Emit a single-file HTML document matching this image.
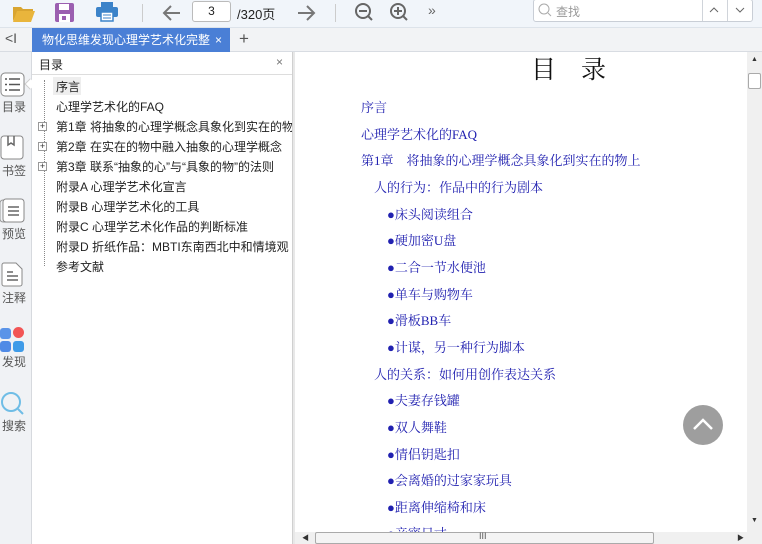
<!DOCTYPE html>
<html><head><meta charset="utf-8"><style>
*{margin:0;padding:0;box-sizing:border-box}
body{width:762px;height:544px;overflow:hidden;position:relative;background:#fff;font-family:"Liberation Sans","Noto Sans CJK SC",sans-serif;font-size:12px;color:#222}
.abs{position:absolute}
#tb{left:0;top:0;width:762px;height:28px;background:#f1f5fa;border-bottom:1px solid #dde3ea}
#tabs{left:0;top:28px;width:762px;height:24px;background:#f2f3f5;border-bottom:1px solid #d8dce2}
#side{left:0;top:52px;width:32px;height:492px;background:#f0f2f5;border-right:1px solid #d6d9de}
#toc{left:32px;top:52px;width:261px;height:492px;background:#fff;border-right:1px solid #d0d0d0}
.si{position:absolute;left:0;width:28px;text-align:center;font-size:12px;color:#555}
.ti{position:absolute;left:56px;font-size:12px;color:#222;white-space:nowrap;width:236px;overflow:hidden}
.pl{position:absolute;left:38px;width:9px;height:9px;border:1px solid #999;background:#fff;font-size:9px;line-height:7px;text-align:center;color:#333}
#page{left:295px;top:52px;width:452px;height:480px;background:#fff;overflow:hidden;font-family:"Liberation Serif","Noto Serif CJK SC",serif;color:#2020b0;font-size:13px}
.l{position:absolute;white-space:nowrap}
</style></head><body>
<div id="tb" class="abs">
 <svg class="abs" style="left:12px;top:3px" width="24" height="20"><path d="M1 4h8l2 2h10v3H6L1 18z" fill="#d9a531"/><path d="M5 8h18l-4 11H1z" fill="#e9b53c"/></svg>
 <svg class="abs" style="left:55px;top:3px" width="19" height="19"><rect x="0" y="0" width="19" height="19" rx="2" fill="#9b5fb0"/><rect x="4" y="1" width="10" height="6" fill="#fff"/><rect x="4" y="11" width="11" height="8" fill="#fff"/><rect x="7" y="13" width="4" height="4" fill="#9b5fb0"/></svg>
 <svg class="abs" style="left:96px;top:2px" width="22" height="20"><rect x="5" y="0" width="12" height="5" fill="#3c83c9"/><rect x="0" y="5" width="22" height="10" rx="2" fill="#3c83c9"/><rect x="5" y="10" width="12" height="9" fill="#fff" stroke="#3c83c9" stroke-width="1.5"/><line x1="7" y1="13" x2="15" y2="13" stroke="#3c83c9"/><line x1="7" y1="16" x2="15" y2="16" stroke="#3c83c9"/></svg>
 <div class="abs" style="left:142px;top:4px;width:1px;height:18px;background:#ccc"></div>
 <svg class="abs" style="left:162px;top:3px" width="20" height="20"><path d="M18 10H3M9 3L2 10l7 7" fill="none" stroke="#777" stroke-width="2"/></svg>
 <div class="abs" style="left:192px;top:1px;width:39px;height:21px;border:1px solid #bbb;border-radius:3px;background:#fff;text-align:center;line-height:19px">3</div>
 <div class="abs" style="left:237px;top:4px;font-size:13px">/320页</div>
 <svg class="abs" style="left:296px;top:3px" width="20" height="20"><path d="M2 10h15M11 3l7 7-7 7" fill="none" stroke="#777" stroke-width="2"/></svg>
 <div class="abs" style="left:335px;top:4px;width:1px;height:18px;background:#ccc"></div>
 <svg class="abs" style="left:354px;top:2px" width="20" height="20"><circle cx="9" cy="9" r="7" fill="none" stroke="#666" stroke-width="2"/><path d="M5 9h8M14 14l4 4" stroke="#666" stroke-width="2"/></svg>
 <svg class="abs" style="left:389px;top:2px" width="20" height="20"><circle cx="9" cy="9" r="7" fill="none" stroke="#666" stroke-width="2"/><path d="M5 9h8M9 5v8M14 14l4 4" stroke="#666" stroke-width="2"/></svg>
 <div class="abs" style="left:428px;top:2px;font-size:14px;color:#666">»</div>
 <div class="abs" style="left:533px;top:-1px;width:220px;height:23px;border:1px solid #c9ced6;border-radius:3px;background:#fff"></div>
 <svg class="abs" style="left:537px;top:2px" width="16" height="16"><circle cx="7" cy="7" r="5" fill="none" stroke="#aaa"/><path d="M11 11l3 3" stroke="#aaa"/></svg>
 <div class="abs" style="left:556px;top:3px;color:#999;font-size:12px">查找</div>
 <div class="abs" style="left:702px;top:0px;width:1px;height:21px;background:#d0d4da"></div>
 <div class="abs" style="left:727px;top:0px;width:1px;height:21px;background:#d0d4da"></div>
 <svg class="abs" style="left:709px;top:6px" width="10" height="8"><path d="M1 6l4-4 4 4" fill="none" stroke="#666"/></svg>
 <svg class="abs" style="left:735px;top:6px" width="10" height="8"><path d="M1 2l4 4 4-4" fill="none" stroke="#666"/></svg>
</div>
<div id="tabs" class="abs">
 <div class="abs" style="left:5px;top:2px;font-size:14px;color:#555">&lt;I</div>
 <div class="abs" style="left:32px;top:0;width:198px;height:24px;background:#4a7fd6;color:#fff;font-size:12px;line-height:24px;padding-left:10px;white-space:nowrap;overflow:hidden">物化思维发现心理学艺术化完整<span style="position:absolute;left:183px">×</span></div>
 <div class="abs" style="left:239px;top:1px;font-size:17px;color:#555">+</div>
</div>
<div id="side" class="abs">
 <svg class="abs" style="left:0;top:20px" width="26" height="26"><rect x="1" y="1" width="23" height="23" rx="4" fill="#fff" stroke="#888"/><path d="M5 7h2M9 7h11M5 12.5h2M9 12.5h11M5 18h2M9 18h11" stroke="#555" stroke-width="1.6"/></svg>
 <div class="abs" style="left:26px;top:28px;width:8px;height:8px;background:#fff;transform:rotate(45deg);border-left:1px solid #ccc;border-bottom:1px solid #ccc"></div>
 <div class="si" style="top:46px">目录</div>
 <svg class="abs" style="left:0;top:83px" width="26" height="26"><rect x="1" y="1" width="22" height="23" rx="3" fill="#fff" stroke="#888"/><path d="M8 1v9l3-2 3 2V1" fill="none" stroke="#666" stroke-width="1.5"/></svg>
 <div class="si" style="top:110px">书签</div>
 <svg class="abs" style="left:0;top:146px" width="26" height="26"><rect x="0" y="2" width="20" height="22" rx="3" fill="none" stroke="#999"/><rect x="3" y="1" width="21" height="23" rx="3" fill="#fff" stroke="#888"/><path d="M8 9h11M8 13h11M8 17h11" stroke="#666" stroke-width="1.4"/></svg>
 <div class="si" style="top:173px">预览</div>
 <svg class="abs" style="left:0;top:210px" width="26" height="26"><path d="M2 3a2 2 0 0 1 2-2h12l6 6v15a2 2 0 0 1-2 2H4a2 2 0 0 1-2-2z" fill="#fff" stroke="#888"/><path d="M7 10h6M7 14h11M7 18h11" stroke="#666" stroke-width="1.4"/></svg>
 <div class="si" style="top:237px">注释</div>
 <div class="abs" style="left:0;top:276px;width:11px;height:11px;border-radius:3px;background:#5b94e8"></div>
 <div class="abs" style="left:13px;top:275px;width:11px;height:11px;border-radius:50%;background:#f25555"></div>
 <div class="abs" style="left:0;top:289px;width:11px;height:11px;border-radius:3px;background:#4f8ae6"></div>
 <div class="abs" style="left:13px;top:289px;width:11px;height:11px;border-radius:3px;background:#3f9be8"></div>
 <div class="si" style="top:301px">发现</div>
 <svg class="abs" style="left:0;top:339px" width="26" height="26"><circle cx="11" cy="11" r="9" fill="none" stroke="#6fbde6" stroke-width="2"/><path d="M18 18l5 5" stroke="#6fbde6" stroke-width="2"/></svg>
 <div class="si" style="top:365px">搜索</div>
</div>
<div id="toc" class="abs">
 <div class="abs" style="left:0;top:0;width:260px;height:23px;border-bottom:1px solid #ddd;background:#fff"></div>
 <div class="abs" style="left:7px;top:4px">目录</div>
 <div class="abs" style="left:244px;top:3px;color:#777">×</div>
</div>
<div class="abs" style="left:44px;top:80px;width:0;height:186px;border-left:1px dotted #888"></div>
<div class="abs" style="left:53px;top:77px;width:28px;height:18px;background:#eee"></div>
<div class="ti" style="top:78px">序言</div>
<div class="ti" style="top:98px">心理学艺术化的FAQ</div>
<div class="ti" style="top:118px">第1章 将抽象的心理学概念具象化到实在的物上</div>
<div class="ti" style="top:138px">第2章 在实在的物中融入抽象的心理学概念</div>
<div class="ti" style="top:158px">第3章 联系“抽象的心”与“具象的物”的法则</div>
<div class="ti" style="top:178px">附录A 心理学艺术化宣言</div>
<div class="ti" style="top:198px">附录B 心理学艺术化的工具</div>
<div class="ti" style="top:218px">附录C 心理学艺术化作品的判断标准</div>
<div class="ti" style="top:238px">附录D 折纸作品：MBTI东南西北中和情境观</div>
<div class="ti" style="top:258px">参考文献</div>
<div class="pl" style="top:122px">+</div><div class="pl" style="top:142px">+</div><div class="pl" style="top:162px">+</div>
<div class="abs" style="left:293px;top:52px;width:2px;height:492px;background:#e8e8e8"></div>
<div id="page" class="abs">
 <div class="l" style="left:236px;top:-2px;font-size:25px;color:#111">目　录</div>
 <div class="l" style="left:66px;top:45px">序言</div>
 <div class="l" style="left:66px;top:72px">心理学艺术化的FAQ</div>
 <div class="l" style="left:66px;top:98px">第1章　将抽象的心理学概念具象化到实在的物上</div>
 <div class="l" style="left:79px;top:125px">人的行为：作品中的行为剧本</div>
 <div class="l" style="left:92px;top:152px">●床头阅读组合</div>
 <div class="l" style="left:92px;top:178px">●硬加密U盘</div>
 <div class="l" style="left:92px;top:205px">●二合一节水便池</div>
 <div class="l" style="left:92px;top:232px">●单车与购物车</div>
 <div class="l" style="left:92px;top:258px">●滑板BB车</div>
 <div class="l" style="left:92px;top:285px">●计谋，另一种行为脚本</div>
 <div class="l" style="left:79px;top:312px">人的关系：如何用创作表达关系</div>
 <div class="l" style="left:92px;top:338px">●夫妻存钱罐</div>
 <div class="l" style="left:92px;top:365px">●双人舞鞋</div>
 <div class="l" style="left:92px;top:392px">●情侣钥匙扣</div>
 <div class="l" style="left:92px;top:418px">●会离婚的过家家玩具</div>
 <div class="l" style="left:92px;top:445px">●距离伸缩椅和床</div>
 <div class="l" style="left:92px;top:471px">●亲密尺寸</div>
</div>
<div class="abs" style="left:683px;top:405px;width:40px;height:40px;border-radius:50%;background:#9e9e9e"></div>
<svg class="abs" style="left:683px;top:405px" width="40" height="40"><path d="M11 24l9-9 9 9" fill="none" stroke="#fff" stroke-width="2.5"/></svg>
<div class="abs" style="left:747px;top:52px;width:15px;height:480px;background:#f0f0f0"></div>
<div class="abs" style="left:748px;top:73px;width:13px;height:16px;background:#fff;border:1px solid #aaa;border-radius:2px"></div>
<div class="abs" style="left:751px;top:56px;font-size:7px;color:#333">▲</div>
<div class="abs" style="left:751px;top:517px;font-size:7px;color:#333">▼</div>
<div class="abs" style="left:295px;top:532px;width:467px;height:12px;background:#f0f0f0"></div>
<div class="abs" style="left:315px;top:532px;width:339px;height:12px;background:#f4f4f4;border:1px solid #aaa;border-radius:2px"></div>
<div class="abs" style="left:479px;top:531px;font-size:9px;color:#555">III</div>
<div class="abs" style="left:302px;top:533px;font-size:7px;color:#333">◀</div>
<div class="abs" style="left:737px;top:533px;font-size:7px;color:#333">▶</div>
</body></html>
